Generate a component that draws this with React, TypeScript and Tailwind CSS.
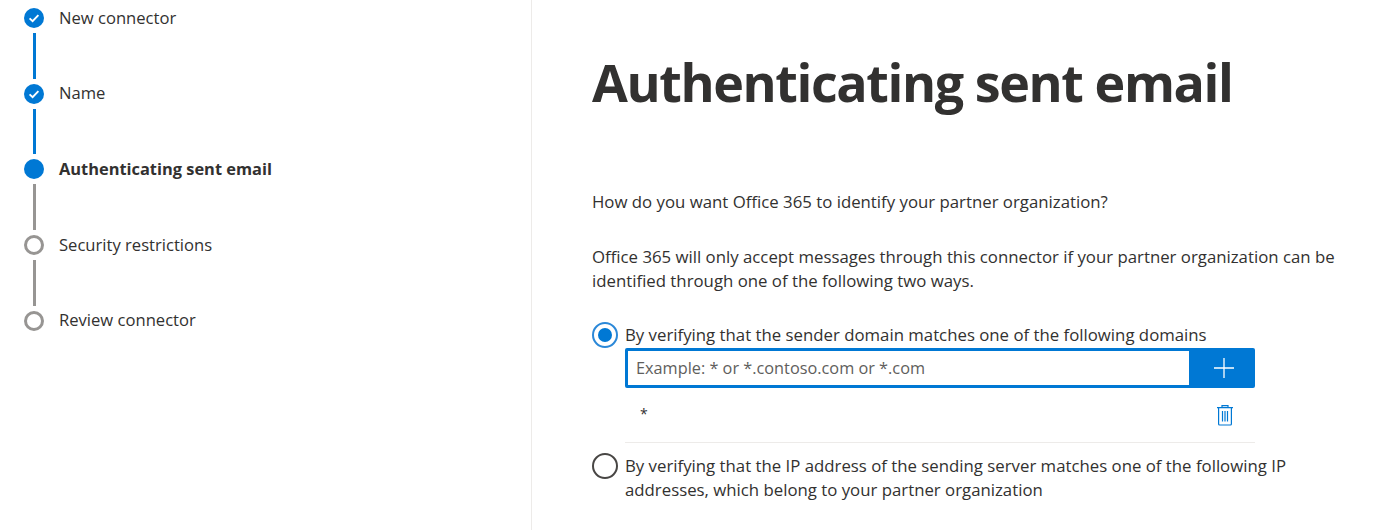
import React from 'react';

const font = "font-['Open_Sans',sans-serif]";

const steps = [
  { label: 'New connector', state: 'done' },
  { label: 'Name', state: 'done' },
  { label: 'Authenticating sent email', state: 'current' },
  { label: 'Security restrictions', state: 'todo' },
  { label: 'Review connector', state: 'todo' },
];

const StepDot = ({ state }: { state: string }) => {
  if (state === 'done') {
    return (
      <div className="w-5 h-5 rounded-full bg-[#0078d4] flex items-center justify-center">
        <svg width="12" height="12" viewBox="0 0 12 12" fill="none">
          <path d="M1.6 6.4 4.6 9.2 10.4 3.2" stroke="white" strokeWidth="1.9" />
        </svg>
      </div>
    );
  }
  if (state === 'current') return <div className="w-5 h-5 rounded-full bg-[#0078d4]" />;
  return <div className="w-5 h-5 rounded-full border-[3px] border-[#979593] bg-white" />;
};

const Sidebar = () => (
  <aside className="w-[532px] h-[530px] shrink-0 border-r border-[#edebe9] pl-6 pt-2">
    {steps.map((step, i) => (
      <div key={step.label}>
        <div className="flex items-center h-5">
          <StepDot state={step.state} />
          <span
            className={`ml-[15px] whitespace-nowrap text-[#323130] ${
              step.state === 'current' ? 'font-bold text-[16.4px]' : 'text-[16.6px]'
            }`}
          >
            {step.label}
          </span>
        </div>
        {i < steps.length - 1 && (
          <div
            className={`ml-[9px] w-[2.5px] h-[45.7px] my-[5px] ${
              step.state === 'done' ? 'bg-[#0078d4]' : 'bg-[#979593]'
            }`}
          />
        )}
      </div>
    ))}
  </aside>
);

const Radio = ({ on }: { on?: boolean }) => (
  <div
    className={`w-[26px] h-[26px] shrink-0 rounded-full flex items-center justify-center border-2 ${
      on ? 'border-[#2b88d8]' : 'border-[#484644]'
    }`}
  >
    {on && <div className="w-[14px] h-[14px] rounded-full bg-[#0078d4]" />}
  </div>
);

const TrashIcon = () => (
  <svg width="18" height="22" viewBox="0 0 18 22" fill="none" stroke="#0078d4" strokeWidth="1.2">
    <path d="M1 3.6h16M6 3.6V1.6h6v2M2.6 3.6V20a1 1 0 0 0 1 1h10.8a1 1 0 0 0 1-1V3.6M6.5 7v10.5M9 7v10.5M11.5 7v10.5" />
  </svg>
);

export default function App() {
  return (
    <div className={`w-[1379px] h-[530px] overflow-hidden bg-white flex text-[#323130] ${font}`}>
      <Sidebar />
      <main className="pl-[60px] w-[847px]">
        <h1 className="mt-[44px] text-[52px] leading-[76px] font-bold tracking-[-1.4px] whitespace-nowrap">
          Authenticating sent email
        </h1>
        <p className="mt-[70px] text-[16.8px] leading-[24px]">
          How do you want Office 365 to identify your partner organization?
        </p>
        <p className="mt-[31px] text-[16.8px] leading-[24px] w-[760px]">
          Office 365 will only accept messages through this connector if your partner organization can be identified
          through one of the following two ways.
        </p>
        <div className="mt-[29px] flex items-center gap-[7px] h-[26px]">
          <Radio on />
          <span className="text-[16.8px] whitespace-nowrap">
            By verifying that the sender domain matches one of the following domains
          </span>
        </div>
        <div className="ml-[33px] w-[630px]">
          <div className="flex h-[40px]">
            <div className="w-[567px] border-[3px] border-[#0078d4] rounded-l-[2px] flex items-center pl-[8px] pt-px text-[16.3px] text-[#605e5c]">
              Example: * or *.contoso.com or *.com
            </div>
            <div className="flex-1 bg-[#0078d4] rounded-r-[2px] flex items-center justify-center">
              <svg width="20" height="20" viewBox="0 0 20 20" stroke="white" strokeWidth="1.3">
                <path d="M0 10h20M10 0v20" />
              </svg>
            </div>
          </div>
          <div className="flex items-start justify-between h-[55px] border-b border-[#edebe9] pl-[15px] pr-[21px] pt-[16px]">
            <span className="text-[14px] leading-[20px]">*</span>
            <TrashIcon />
          </div>
        </div>
        <div className="mt-[10px] flex items-start gap-[7px]">
          <Radio />
          <p className="mt-px text-[16.8px] leading-[24px] w-[680px]">
            By verifying that the IP address of the sending server matches one of the following IP addresses, which
            belong to your partner organization
          </p>
        </div>
      </main>
    </div>
  );
}
